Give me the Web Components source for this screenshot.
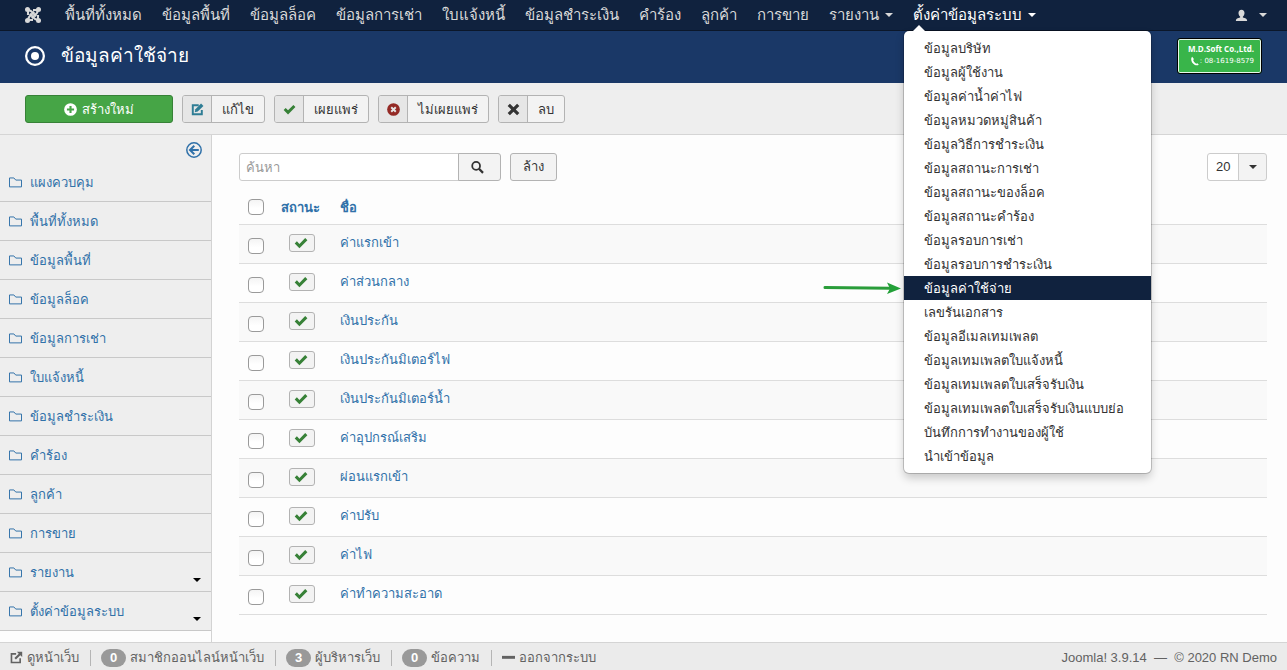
<!DOCTYPE html>
<html lang="th">
<head>
<meta charset="utf-8">
<meta name="viewport" content="width=device-width, initial-scale=1">
<title>ข้อมูลค่าใช้จ่าย</title>
<style>
  body { margin: 0; background: #fdfdfd; color: #333; font: 13px/18px "Liberation Sans", sans-serif; }
</style>
</head>
<body>
<admin-page></admin-page>

<script>
const ICONS = {
  joomla: '<g fill="none" stroke="currentColor" stroke-width="2.100"><path d="M3 8V5.500C3 3.200 5 3 6.500 4.500L11.200 9.200"/><path d="M8 3H10.500C12.800 3 13 5 11.500 6.500L6.800 11.200"/><path d="M13 8V10.500C13 12.800 11 13 9.500 11.500L4.800 6.800"/><path d="M8 13H5.500C3.200 13 3 11 4.500 9.500L9.200 4.800"/></g><g fill="currentColor"><circle cx="2.500" cy="2.500" r="2.500"/><circle cx="13.500" cy="2.500" r="2.500"/><circle cx="2.500" cy="13.500" r="2.500"/><circle cx="13.500" cy="13.500" r="2.500"/></g>',
  target: '<circle cx="8" cy="8" r="7.100" fill="none" stroke="currentColor" stroke-width="1.800"/><circle cx="8" cy="8" r="3.200" fill="currentColor"/>',
  plus: '<circle cx="8" cy="8" r="7.800" fill="currentColor"/><path d="M8 3.600v8.800M3.600 8h8.800" stroke="#46a546" stroke-width="2.600"/>',
  edit: '<path d="M9.500 2.700H2.200v11.100h11.100V8.500" fill="none" stroke="currentColor" stroke-width="2.400"/><path d="M4.600 11.500l.8-3.800L12.400.7l2.900 2.900-7 7z" fill="currentColor"/>',
  check: '<path d="M.8 8.600L3.300 6.100 6.200 9 12.800 2.400 15.300 4.900 6.200 14z" fill="currentColor"/>',
  ban: '<circle cx="8" cy="8" r="7.800" fill="currentColor"/><path d="M5.200 5.200l5.600 5.600M10.800 5.200l-5.600 5.600" stroke="#e6e6e6" stroke-width="2.400"/>',
  cross: '<path d="M3.600.8L8 5.200 12.400.8l2.800 2.800L10.800 8l4.400 4.400-2.800 2.800L8 10.800l-4.400 4.400-2.800-2.800L5.200 8 .8 3.600z" fill="currentColor"/>',
  search: '<circle cx="6.300" cy="6" r="4.800" fill="none" stroke="currentColor" stroke-width="2.200"/><path d="M9.800 9.600l5 5" stroke="currentColor" stroke-width="2.800"/>',
  back: '<circle cx="8" cy="8" r="7.200" fill="none" stroke="currentColor" stroke-width="1.500"/><path d="M8.300 3.700L4 8l4.300 4.300M4.500 8h8.300" fill="none" stroke="currentColor" stroke-width="2"/>',
  folder: '<path d="M.6 13.400v-11H6L8.300 5H15.400v8.400z" fill="none" stroke="currentColor" stroke-width="1.200"/>',
  user: '<path d="M8 .8c2.300 0 3.700 1.700 3.700 4 0 1.800-.8 3.600-2 4.300v1.300c3 .5 5.300 1.700 5.300 4.300H1c0-2.600 2.300-3.800 5.300-4.300V9.100c-1.200-.7-2-2.500-2-4.300C4.300 2.500 5.700.8 8 .8z" fill="currentColor"/>',
  external: '<path d="M7.500 3.500H1.800v10.700h10.700V9" fill="none" stroke="currentColor" stroke-width="2"/><path d="M8.500 1H15v6.500l-2.300-2.300-5.400 5.400-1.900-1.900 5.400-5.400z" fill="currentColor"/>',
  minus: '<path d="M0 6h16v3.600H0z" fill="currentColor"/>',
  phone: '<path d="M3.500 1c-3 3-1 8 1 10.500s6 4.500 9.500 2.500l-2-2.500-2 .7C7.500 11 5.500 8.500 5 6L6.500 5z" fill="currentColor"/>'
};

const BOX = '*, *::before, *::after { box-sizing: border-box; } a { text-decoration: none; color: inherit; }';

class BaseElement extends HTMLElement {
  connectedCallback() {
    if (this.shadowRoot) return;
    this.attachShadow({ mode: 'open' }).innerHTML = this.render();
  }
}
const define = (name, render) =>
  customElements.define(name, class extends BaseElement { render() { return render(this); } });

define('ui-icon', el => `
  <style>
    :host { display: inline-flex; flex: none; width: var(--size, 13px); height: var(--size, 13px); }
    svg { width: 100%; height: 100%; display: block; }
  </style>
  <svg viewBox="0 0 16 16" aria-hidden="true">${ICONS[el.getAttribute('name')]}</svg>`);

define('ui-caret', () => `
  <style>
    :host { display: inline-block; flex: none; width: 8px; height: 4px; background: currentColor; clip-path: polygon(0 0, 100% 0, 50% 100%); }
  </style>`);

define('nav-item', el => `
  <style>${BOX}
    :host { display: block; position: relative; }
    .link { display: flex; align-items: center; gap: 6px; height: 30px; padding: 0 10px; color: #d9d9d9; font-size: 15px; white-space: nowrap; }
    :host([open]) .link { color: #fff; }
  </style>
  <a class="link" href="#"><slot></slot>${el.hasAttribute('menu') ? '<ui-caret></ui-caret>' : ''}</a>
  <slot name="menu"></slot>`);

define('drop-menu', () => `
  <style>${BOX}
    :host { display: block; position: absolute; z-index: 10; top: 31px; left: 1px; min-width: 247px; padding: 5px 0; background: #fff; border-radius: 5px; box-shadow: 0 5px 10px rgba(0,0,0,.2), 0 0 0 1px rgba(0,0,0,.18); }
    :host::before { content: ""; position: absolute; top: -6px; left: 9px; border: 6px solid transparent; border-top: 0; border-bottom-color: #fff; }
  </style>
  <slot></slot>`);

define('menu-entry', el => `
  <style>${BOX}
    :host { display: block; position: relative; }
    a { display: block; padding: 4px 20px 2px; color: #333; line-height: 18px; white-space: nowrap; }
    :host([current]) a { color: #fff; background: #10223e; }
    svg { position: absolute; right: 100%; top: 4px; margin-right: 2px; }
  </style>
  <a href="#"><slot></slot></a>
  ${el.hasAttribute('current') ? '<svg width="80" height="16" viewBox="0 0 80 16" aria-hidden="true"><path d="M3 7.500L68 8.300" stroke="#2a9d3a" stroke-width="3" stroke-linecap="round"/><path d="M65 2.500L79 8.500 65 14l3-5.600z" fill="#22a038"/></svg>' : ''}`);

define('top-nav', () => `
  <style>${BOX}
    :host { display: flex; align-items: center; height: 31px; padding: 0 10px 0 25px; background: #10223e; border-bottom: 1px solid #0b172a; color: #d9d9d9; }
    nav { display: flex; flex: 1; margin-left: 14px; }
    .brand { display: flex; --size: 16px; }
    .user { display: flex; align-items: center; gap: 11px; padding: 0 10px; }
  </style>
  <a class="brand" href="#" aria-label="Joomla"><ui-icon name="joomla"></ui-icon></a>
  <nav>
    ${['พื้นที่ทั้งหมด','ข้อมูลพื้นที่','ข้อมูลล็อค','ข้อมูลการเช่า','ใบแจ้งหนี้','ข้อมูลชำระเงิน','คำร้อง','ลูกค้า','การขาย'].map(t => `<nav-item>${t}</nav-item>`).join('')}
    <nav-item menu>รายงาน</nav-item>
    <nav-item menu open>ตั้งค่าข้อมูลระบบ
      <drop-menu slot="menu">
        ${['ข้อมูลบริษัท','ข้อมูลผู้ใช้งาน','ข้อมูลค่าน้ำค่าไฟ','ข้อมูลหมวดหมู่สินค้า','ข้อมูลวิธีการชำระเงิน','ข้อมูลสถานะการเช่า','ข้อมูลสถานะของล็อค','ข้อมูลสถานะคำร้อง','ข้อมูลรอบการเช่า','ข้อมูลรอบการชำระเงิน','*ข้อมูลค่าใช้จ่าย','เลขรันเอกสาร','ข้อมูลอีเมลเทมเพลต','ข้อมูลเทมเพลตใบแจ้งหนี้','ข้อมูลเทมเพลตใบเสร็จรับเงิน','ข้อมูลเทมเพลตใบเสร็จรับเงินแบบย่อ','บันทึกการทำงานของผู้ใช้','นำเข้าข้อมูล'].map(t => t[0] === '*' ? `<menu-entry current>${t.slice(1)}</menu-entry>` : `<menu-entry>${t}</menu-entry>`).join('')}
      </drop-menu>
    </nav-item>
  </nav>
  <a class="user" href="#" aria-label="User menu"><ui-icon name="user"></ui-icon><ui-caret></ui-caret></a>`);

define('company-badge', () => `
  <style>${BOX}
    :host { display: flex; flex-direction: column; justify-content: center; width: 85px; height: 36px; padding: 0 7px 2px; color: #fff; background: #39b54a; border: 1px solid #000; border-radius: 3px; box-shadow: inset 0 0 0 1px #e8f7ea; font: bold 8px/12px "Open Sans", sans-serif; white-space: nowrap; text-align: right; }
    .phone { display: flex; justify-content: flex-end; align-items: center; font: 7px/12px "DejaVu Sans", sans-serif; --size: 10px; }
  </style>
  <span><slot></slot></span><span class="phone"><ui-icon name="phone"></ui-icon><slot name="phone"></slot></span>`);

define('page-header', () => `
  <style>${BOX}
    :host { display: flex; align-items: center; gap: 16px; height: 52px; padding: 0 25px 2px; background: #1a3867; color: #fff; --size: 20px; }
    h1 { flex: 1; margin: 0; font-size: 19px; line-height: 36px; font-weight: normal; }
  </style>
  <ui-icon name="target"></ui-icon><h1><slot></slot></h1>
  <company-badge>M.D.Soft Co.,Ltd.<span slot="phone">: 08-1619-8579</span></company-badge>`);

define('tool-button', el => `
  <style>${BOX}
    :host { display: block; }
    button { display: flex; align-items: stretch; height: 28px; padding: 0; overflow: hidden; font: inherit; line-height: 28px; color: #333; background: #f3f3f3; border: 1px solid #b3b3b3; border-radius: 3px; cursor: pointer; }
    .icon { display: flex; align-items: center; justify-content: center; width: 29px; background: #e6e6e6; border-right: 1px solid #b3b3b3; color: var(--tint, #333); }
    .text { padding: 0 10px; }
    :host([primary]) button { width: 148px; justify-content: center; color: #fff; background: #46a546; border-color: #378137; }
    :host([primary]) .icon { width: 13px; background: none; border: 0; color: #fff; }
    :host([primary]) .text { padding: 0 0 0 5px; }
  </style>
  <button type="button"><span class="icon"><ui-icon name="${el.getAttribute('icon')}"></ui-icon></span><span class="text"><slot></slot></span></button>`);

define('tool-bar', () => `
  <style>${BOX}
    :host { display: flex; gap: 9px; height: 52px; padding: 12px 25px; background: #eee; border-bottom: 1px solid #d5d5d5; }
  </style>
  <tool-button primary icon="plus">สร้างใหม่</tool-button>
  <tool-button icon="edit" style="--tint:#2f7d95">แก้ไข</tool-button>
  <tool-button icon="check" style="--tint:#378137">เผยแพร่</tool-button>
  <tool-button icon="ban" style="--tint:#942a25">ไม่เผยแพร่</tool-button>
  <tool-button icon="cross">ลบ</tool-button>`);

define('side-link', el => `
  <style>${BOX}
    :host { display: block; }
    a { display: flex; align-items: center; gap: 8px; height: 39px; padding: 0 10px 0 9px; color: #3071a9; border-bottom: 1px solid #c8c8c8; }
    .text { flex: 1; padding-top: 2px; }
    ui-caret { color: #000; align-self: flex-end; margin-bottom: 9px; }
  </style>
  <a href="#"><ui-icon name="folder"></ui-icon><span class="text"><slot></slot></span>${el.hasAttribute('menu') ? '<ui-caret></ui-caret>' : ''}</a>`);

define('side-bar', () => `
  <style>${BOX}
    :host { display: block; flex: none; width: 212px; border-right: 1px solid #d3d3d3; background: #fdfdfd; }
    nav { background: #eee; }
    .top { display: flex; justify-content: flex-end; padding: 7px 9px 5px; }
    button { display: flex; padding: 0; border: 0; background: none; color: #3071a9; --size: 16px; }
  </style>
  <nav>
    <div class="top"><button type="button" aria-label="Toggle sidebar"><ui-icon name="back"></ui-icon></button></div>
    ${['แผงควบคุม','พื้นที่ทั้งหมด','ข้อมูลพื้นที่','ข้อมูลล็อค','ข้อมูลการเช่า','ใบแจ้งหนี้','ข้อมูลชำระเงิน','คำร้อง','ลูกค้า','การขาย'].map(t => `<side-link>${t}</side-link>`).join('')}
    <side-link menu>รายงาน</side-link>
    <side-link menu>ตั้งค่าข้อมูลระบบ</side-link>
  </nav>`);

define('filter-bar', () => `
  <style>${BOX}
    :host { display: flex; align-items: flex-start; gap: 9px; }
    .search { display: flex; }
    input, button, select { height: 28px; margin: 0; font: inherit; color: #333; border: 1px solid #b3b3b3; }
    input { width: 220px; padding: 0 6px; background: #fff; border-color: #ccc; border-radius: 3px 0 0 3px; }
    input::placeholder { color: #999; opacity: 1; }
    button { padding: 0 12px; background: #f3f3f3; border-radius: 3px; }
    .search button { display: flex; align-items: center; width: 43px; margin-left: -1px; border-radius: 0 3px 3px 0; }
    .limit { display: grid; margin-left: auto; width: 60px; }
    .limit > * { grid-area: 1 / 1; }
    select { appearance: none; width: 100%; padding: 0 8px; border-color: #ccc; border-radius: 3px; background: linear-gradient(90deg, #fff 30px, #ccc 30px 31px, #f3f3f3 31px); }
    ui-caret { place-self: center end; margin-right: 10px; pointer-events: none; }
  </style>
  <form class="search"><input type="text" placeholder="ค้นหา" aria-label="ค้นหา"><button type="button" aria-label="ค้นหา"><ui-icon name="search"></ui-icon></button></form>
  <button type="button">ล้าง</button>
  <label class="limit"><select aria-label="จำนวนรายการ"><option>20</option></select><ui-caret></ui-caret></label>`);

define('check-box', el => `
  <style>${BOX}
    :host { display: block; width: 16px; height: 16px; }
    input { appearance: none; display: block; width: 16px; height: 16px; margin: 0; background: linear-gradient(#f4f4f4, #fff 60%); border: 1px solid #9a9a9a; border-radius: 4px; }
  </style>
  <input type="checkbox" aria-label="${el.getAttribute('label')}">`);

define('state-button', () => `
  <style>${BOX}
    :host { display: block; --size: 14px; }
    button { display: flex; align-items: center; width: 26px; height: 18px; padding: 0 4px; background: #f3f3f3; color: #378137; border: 1px solid #b3b3b3; border-radius: 3px; }
  </style>
  <button type="button" aria-label="เผยแพร่"><ui-icon name="check"></ui-icon></button>`);

define('expense-table', () => `
  <style>${BOX}
    :host { display: block; }
    table { width: 100%; border-collapse: separate; border-spacing: 0; }
    th, td { padding: 0; text-align: left; vertical-align: top; border-bottom: 1px solid #ddd; }
    th { height: 35px; padding-top: 9px; color: #3071a9; }
    td { height: 39px; padding-top: 9px; color: #3071a9; }
    tbody tr:nth-child(odd) td { background: #f9f9f9; }
    .pick { width: 42px; padding-left: 9px; }
    td.pick { padding-top: 13px; }
    .state { width: 59px; }
    td.state { padding-left: 8px; }
  </style>
  <table>
    <thead><tr><th class="pick"><check-box label="เลือกทั้งหมด"></check-box></th><th class="state"><a href="#">สถานะ</a></th><th><a href="#">ชื่อ</a></th></tr></thead>
    <tbody>${['ค่าแรกเข้า','ค่าส่วนกลาง','เงินประกัน','เงินประกันมิเตอร์ไฟ','เงินประกันมิเตอร์น้ำ','ค่าอุปกรณ์เสริม','ผ่อนแรกเข้า','ค่าปรับ','ค่าไฟ','ค่าทำความสะอาด'].map(t => `<tr><td class="pick"><check-box label="${t}"></check-box></td><td class="state"><state-button></state-button></td><td><a href="#">${t}</a></td></tr>`).join('')}</tbody>
  </table>`);

define('status-bar', () => `
  <style>${BOX}
    :host { display: flex; align-items: center; height: 28px; padding: 2px 10px 0; background: #ebebeb; border-top: 1px solid #d4d4d4; color: #626262; }
    .group { display: flex; align-items: center; flex: 1; }
    .item { display: flex; align-items: center; gap: 4px; }
    .item + .item { margin-left: 11px; padding-left: 11px; background: linear-gradient(#b5b5b5, #b5b5b5) left center / 1px 16px no-repeat; }
    .count { width: 25px; height: 18px; border-radius: 9px; background: #999; color: #fff; font-weight: bold; text-align: center; }
    .version { white-space: pre; }
  </style>
  <div class="group">
    <a class="item" href="#"><ui-icon name="external"></ui-icon>ดูหน้าเว็บ</a>
    <span class="item"><span class="count">0</span>สมาชิกออนไลน์หน้าเว็บ</span>
    <span class="item"><span class="count">3</span>ผู้บริหารเว็บ</span>
    <a class="item" href="#"><span class="count">0</span>ข้อความ</a>
    <a class="item" href="#"><ui-icon name="minus"></ui-icon>ออกจากระบบ</a>
  </div>
  <span class="version">Joomla! 3.9.14&nbsp; —&nbsp; © 2020 RN Demo</span>`);

define('admin-page', () => `
  <style>${BOX}
    :host { display: flex; flex-direction: column; min-height: 100vh; }
    .body { display: flex; flex: 1; }
    main { flex: 1; padding: 18px 20px 27px 27px; }
    filter-bar { margin-bottom: 9px; }
    status-bar { position: sticky; bottom: 0; }
  </style>
  <top-nav></top-nav>
  <page-header>ข้อมูลค่าใช้จ่าย</page-header>
  <tool-bar></tool-bar>
  <div class="body"><side-bar></side-bar><main><filter-bar></filter-bar><expense-table></expense-table></main></div>
  <status-bar></status-bar>`);
</script>
</body>
</html>
